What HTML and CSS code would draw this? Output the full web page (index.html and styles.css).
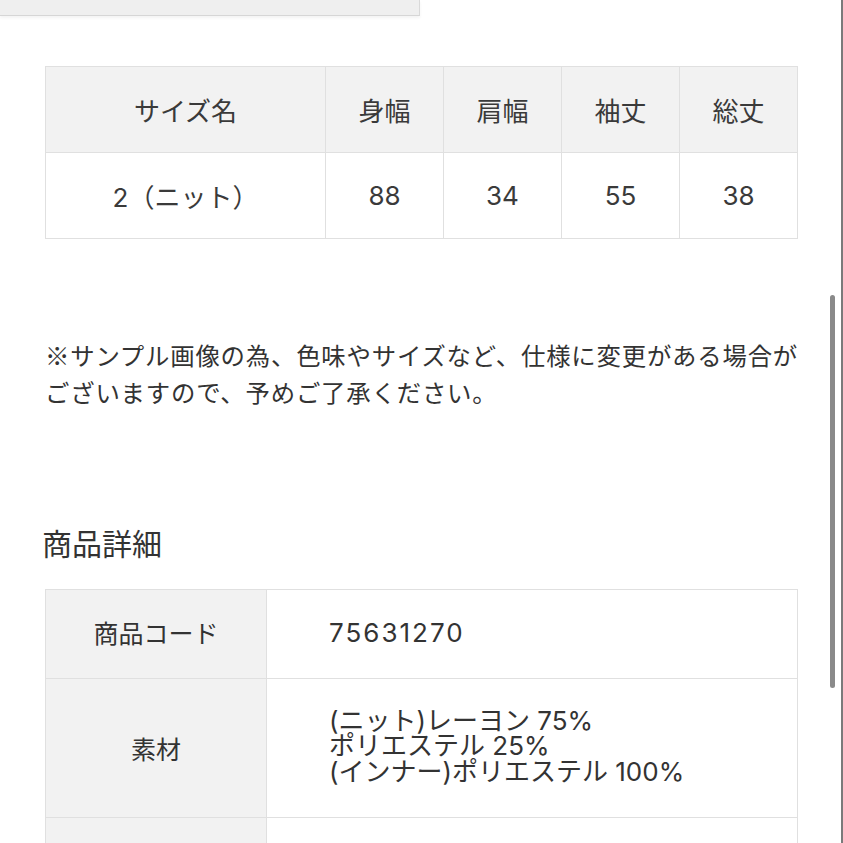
FILE: index.html
```html
<!DOCTYPE html>
<html lang="ja">
<head>
<meta charset="utf-8">
<link rel="stylesheet" href="styles.css">
</head>
<body>
<div class="top-box"></div>
<main class="content">
  <table class="size-table">
    <tr class="head">
      <th class="c-name">サイズ名</th>
      <th>身幅</th>
      <th>肩幅</th>
      <th>袖丈</th>
      <th>総丈</th>
    </tr>
    <tr>
      <td>2（ニット）</td>
      <td>88</td>
      <td>34</td>
      <td>55</td>
      <td>38</td>
    </tr>
  </table>

  <p class="note">※サンプル画像の為、色味やサイズなど、仕様に変更がある場合がございますので、予めご了承ください。</p>

  <h2 class="section-title">商品詳細</h2>

  <table class="detail-table">
    <tr class="r-code">
      <th>商品コード</th>
      <td class="code">75631270</td>
    </tr>
    <tr class="r-mat">
      <th>素材</th>
      <td class="mat">(ニット)レーヨン 75%<br>ポリエステル 25%<br>(インナー)ポリエステル 100%</td>
    </tr>
    <tr class="r-empty">
      <th></th>
      <td></td>
    </tr>
  </table>
</main>
<div class="scroll-thumb"></div>
<div class="edge-line"></div>
</body>
</html>
```

FILE: styles.css
```css
html, body {
  margin: 0;
  padding: 0;
  overflow: hidden;
  background: #fff;
}
body {
  font-family: Inter, "Noto Sans CJK JP", sans-serif;
  color: #363636;
}
.top-box {
  width: 419px;
  height: 15px;
  background: #efefef;
  border-right: 1px solid #d9d9d9;
  border-bottom: 1px solid #d6d6d6;
  box-shadow: 0 2px 3px rgba(0,0,0,0.05);
}
.content {
  padding-left: 45px;
  width: 752px;
}
.size-table {
  margin-top: 50px;
  width: 753px;
  border-collapse: collapse;
  table-layout: fixed;
}
.size-table th, .size-table td {
  border: 1px solid #e0e0e0;
  height: 85px;
  padding: 0;
  text-align: center;
  vertical-align: middle;
  font-size: 26px;
  font-weight: 400;
  color: #3a3a3a;
}
.size-table .head th {
  background: #f2f2f2;
}
.size-table .c-name {
  width: 279px;
}
.note {
  margin: 97px 0 0;
  font-family: "Noto Sans CJK JP", sans-serif;
  font-size: 24.4px;
  letter-spacing: 0.8px;
  line-height: 37px;
  width: 765px;
  color: #333;
}
.section-title {
  margin: 112px 0 0 -3px;
  font-family: "Noto Sans CJK JP", sans-serif;
  font-size: 30px;
  line-height: 40px;
  font-weight: 400;
  color: #333;
}
.detail-table {
  margin-top: 27px;
  width: 753px;
  border-collapse: collapse;
  table-layout: fixed;
}
.detail-table th, .detail-table td {
  border: 1px solid #e0e0e0;
  padding: 0;
  vertical-align: middle;
  font-weight: 400;
  font-size: 25px;
  color: #333;
}
.detail-table th {
  width: 220px;
  background: #f2f2f2;
  text-align: center;
}
.detail-table td {
  text-align: left;
  padding-left: 62px;
  font-size: 26px;
}
.detail-table td.code {
  letter-spacing: 2px;
  padding-bottom: 4px;
}
.r-code th, .r-code td {
  height: 84px;
}
.r-code th {
  padding-bottom: 4px;
}
.r-mat th, .r-mat td {
  height: 138px;
}
.detail-table td.mat {
  height: 134px;
  line-height: 25.5px;
  padding-bottom: 4px;
}
.r-empty th, .r-empty td {
  height: 120px;
}
.scroll-thumb {
  position: fixed;
  left: 830px;
  top: 295px;
  width: 5px;
  height: 393px;
  border-radius: 3px;
  background: #8a8a8a;
}
.edge-line {
  position: fixed;
  right: 0;
  top: 0;
  width: 2px;
  height: 100%;
  background: #7a7a7a;
}
```
